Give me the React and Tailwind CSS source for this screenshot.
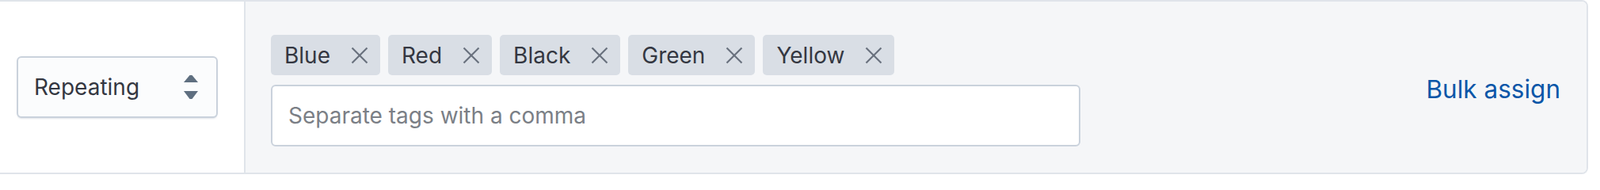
import React from 'react'

const tags = ['Blue', 'Red', 'Black', 'Green', 'Yellow']

function CrossIcon() {
    return (
        <svg width="22" height="22" viewBox="0 0 22 22" fill="none" stroke="#69707d" strokeWidth="2.2" strokeLinecap="butt">
            <path d="M1.5 1.5 L20.5 20.5" />
            <path d="M20.5 1.5 L1.5 20.5" />
        </svg>
    )
}

function SortArrows() {
    return (
        <svg width="18" height="30" viewBox="0 0 18 30" fill="#5f6f80">
            <path d="M7.5 0 H10.5 L18 9 H0 Z" />
            <path d="M0 20 H18 L10.5 30 H7.5 Z" />
        </svg>
    )
}

function Tag({ label }) {
    return (
        <div className="flex items-center h-[51px] pl-[17px] pr-[15px] gap-[26px] rounded-[5px] bg-[#d9dee5] text-[28px] text-[#343741]">
            <span className="leading-none">{label}</span>
            <CrossIcon />
        </div>
    )
}

function App() {
    return (
        <div className="w-[2020px] h-[232px] bg-white font-['Inter',sans-serif]">
            <div className="flex w-[2005px] h-[220px] border-t-2 border-b-2 border-r-2 border-[#e0e4ea] rounded-r-[8px] overflow-hidden">

                <div className="w-[310px] shrink-0 flex items-center pl-[21px] bg-white border-r-2 border-[#e0e4ea]">
                    <div className="w-[254px] h-[78px] flex items-center justify-between pl-[20px] pr-[23px] border-2 border-[#cad2dc] rounded-[6px] bg-[#fbfcfd] shadow-[0_2px_2px_-1px_rgba(152,162,179,0.3)]">
                        <span className="text-[28px] text-[#343741]">Repeating</span>
                        <SortArrows />
                    </div>
                </div>

                <div className="flex-1 flex items-center pl-[32px] pr-[33px] bg-[#f5f6f8]">
                    <div className="flex flex-col gap-[12px] pt-[9px]">
                        <div className="flex gap-[10px]">
                            {tags.map((t) => <Tag key={t} label={t} />)}
                        </div>
                        <div className="w-[1022px] h-[78px] flex items-center pl-[20px] bg-white border-2 border-[#cad2dc] rounded-[6px]">
                            <span className="text-[28px] text-[#7b7f86]">Separate tags with a comma</span>
                        </div>
                    </div>
                    <div className="flex-1" />
                    <a className="pt-[5px] text-[31.5px] text-[#0b56a8] leading-none">Bulk assign</a>
                </div>

            </div>
        </div>
    )
}

export default App
